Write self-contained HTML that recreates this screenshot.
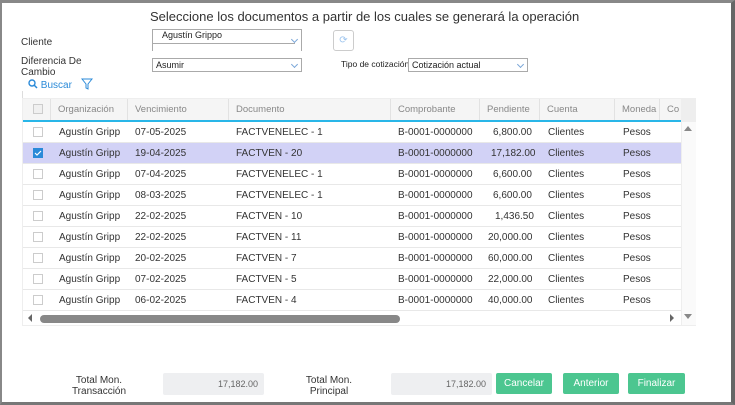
<!DOCTYPE html>
<html><head><meta charset="utf-8"><style>
*{box-sizing:border-box;margin:0;padding:0}
body{width:735px;height:405px;overflow:hidden;background:#fff;font-family:"Liberation Sans",sans-serif;position:relative}
.frame{position:absolute;left:0;top:0;width:735px;height:405px;border-top:3px solid #888;border-left:2px solid #888;border-right:4px solid #666;border-bottom:3px solid #777}
.a{position:absolute;white-space:nowrap}
.sel{position:absolute;border:1px solid #aaa;height:14px;font-size:9px;padding-left:3px;line-height:12px;color:#222}
.chev{position:absolute;right:4px;top:3px;width:5px;height:5px;border-right:1px solid #7aa6d8;border-bottom:1px solid #7aa6d8;transform:rotate(45deg)}
.tbl{position:absolute;left:22px;top:98px;width:674px;height:228px;border:1px solid #eee}
.hdr{position:absolute;left:0;top:0;height:23px;width:658px;background:#f5f5f5;border-bottom:2px solid #29b6e8;font-size:9.5px;color:#888}
.hc{position:absolute;top:0;height:21px;line-height:21px;padding-left:7px;border-right:1px solid #e2e2e2}
.row{position:absolute;left:0;width:658px;height:21px;border-bottom:1px solid #e8e8e8;font-size:10px;color:#333;line-height:22px}
.row span{position:absolute;top:0}
.cb{position:absolute;left:10px;top:5px;width:10px;height:10px;border:1px solid #ccc;background:#fff}
.btn{position:absolute;top:373px;height:21px;background:#4cc690;color:#fff;font-size:10px;line-height:21px;text-align:center;border-radius:2px}
.tot{position:absolute;top:373px;height:22px;background:#eeeff1;border-radius:2px;font-size:9px;color:#666;text-align:right;padding-right:6px;line-height:22px}
.lbl{position:absolute;font-size:10px;color:#333;text-align:center;line-height:11px}
</style></head><body>
<div class="frame"></div>
<div class="a" style="left:150px;top:9px;font-size:13px;color:#333">Seleccione los documentos a partir de los cuales se generará la operación</div>
<div class="a" style="left:21px;top:37px;font-size:10px;color:#333">Cliente</div>
<div class="a" style="left:21px;top:56px;font-size:10px;color:#333;line-height:11px">Diferencia De<br>Cambio</div>
<div class="sel" style="left:152px;top:29px;width:150px;height:22px;border-bottom:none;padding-left:9px;line-height:11px">Agustín Grippo<div class="chev" style="top:7px"></div></div>
<div class="a" style="left:152px;top:43px;width:143px;border-top:1px solid #aaa"></div>
<div class="sel" style="left:152px;top:58px;width:150px">Asumir<div class="chev"></div></div>
<div class="a" style="left:333px;top:30px;width:21px;height:21px;border:1px solid #ccc;border-radius:3px;color:#9cc4ee;font-size:10px;text-align:center;line-height:19px">⟳</div>
<div class="a" style="left:341px;top:59px;font-size:8.5px;color:#222">Tipo de cotización</div>
<div class="sel" style="left:408px;top:58px;width:120px">Cotización actual<div class="chev"></div></div>
<div class="a" style="left:28px;top:78px;font-size:10px;color:#2a8ad8">
<svg width="10" height="10" style="vertical-align:-1px"><circle cx="4" cy="4" r="3" fill="none" stroke="#2a8ad8" stroke-width="1.4"/><line x1="6" y1="6" x2="9" y2="9" stroke="#2a8ad8" stroke-width="1.5"/></svg> Buscar
<svg width="12" height="12" style="vertical-align:-2px;margin-left:6px"><path d="M1 1 H11 L7 6 V11 L5 10 V6 Z" fill="none" stroke="#2a8ad8"/></svg></div>
<div class="a" style="left:22px;top:91px;width:1px;height:7px;background:#ddd"></div>
<div class="tbl">
<div class="hdr">
<div class="hc" style="left:0;width:28px"><div class="cb" style="top:5px;background:#f0f0f0"></div></div>
<div class="hc" style="left:28px;width:77px">Organización</div>
<div class="hc" style="left:105px;width:101px">Vencimiento</div>
<div class="hc" style="left:206px;width:162px">Documento</div>
<div class="hc" style="left:368px;width:89px">Comprobante</div>
<div class="hc" style="left:457px;width:60px">Pendiente</div>
<div class="hc" style="left:517px;width:75px">Cuenta</div>
<div class="hc" style="left:592px;width:45px">Moneda</div>
<div class="hc" style="left:637px;width:21px;border:none;overflow:hidden">Co</div>
</div>
<div style="position:absolute;left:658px;top:0;width:15px;height:226px;background:#fafafa;border-left:1px solid #eee"></div>
<div style="position:absolute;left:658px;top:0;width:15px;height:23px;background:#eee"></div>
<div style="position:absolute;left:661px;top:27px;border:4px solid transparent;border-bottom:5px solid #888;border-top:none"></div>
<div style="position:absolute;left:661px;top:215px;border:4px solid transparent;border-top:5px solid #888;border-bottom:none"></div>
<div class="row" style="top:23px"><div class="cb"></div><span style="left:36px">Agustín Gripp</span><span style="left:112px">07-05-2025</span><span style="left:213px">FACTVENELEC - 1</span><span style="left:375px">B-0001-0000000</span><span style="left:470px">6,800.00</span><span style="left:525px">Clientes</span><span style="left:600px">Pesos</span></div>
<div class="row" style="top:44px;background:#d2d2f6"><div class="cb" style="background:#2a8ad8;border-color:#2a8ad8"><svg width="8" height="8" style="position:absolute;left:0;top:0"><path d="M1 4 L3 6 L7 2" fill="none" stroke="#fff" stroke-width="1.2"/></svg></div><span style="left:36px">Agustín Gripp</span><span style="left:112px">19-04-2025</span><span style="left:213px">FACTVEN - 20</span><span style="left:375px">B-0001-0000000</span><span style="left:468px">17,182.00</span><span style="left:525px">Clientes</span><span style="left:600px">Pesos</span></div>
<div class="row" style="top:65px"><div class="cb"></div><span style="left:36px">Agustín Gripp</span><span style="left:112px">07-04-2025</span><span style="left:213px">FACTVENELEC - 1</span><span style="left:375px">B-0001-0000000</span><span style="left:470px">6,600.00</span><span style="left:525px">Clientes</span><span style="left:600px">Pesos</span></div>
<div class="row" style="top:86px"><div class="cb"></div><span style="left:36px">Agustín Gripp</span><span style="left:112px">08-03-2025</span><span style="left:213px">FACTVENELEC - 1</span><span style="left:375px">B-0001-0000000</span><span style="left:470px">6,600.00</span><span style="left:525px">Clientes</span><span style="left:600px">Pesos</span></div>
<div class="row" style="top:107px"><div class="cb"></div><span style="left:36px">Agustín Gripp</span><span style="left:112px">22-02-2025</span><span style="left:213px">FACTVEN - 10</span><span style="left:375px">B-0001-0000000</span><span style="left:472px">1,436.50</span><span style="left:525px">Clientes</span><span style="left:600px">Pesos</span></div>
<div class="row" style="top:128px"><div class="cb"></div><span style="left:36px">Agustín Gripp</span><span style="left:112px">22-02-2025</span><span style="left:213px">FACTVEN - 11</span><span style="left:375px">B-0001-0000000</span><span style="left:465px">20,000.00</span><span style="left:525px">Clientes</span><span style="left:600px">Pesos</span></div>
<div class="row" style="top:149px"><div class="cb"></div><span style="left:36px">Agustín Gripp</span><span style="left:112px">20-02-2025</span><span style="left:213px">FACTVEN - 7</span><span style="left:375px">B-0001-0000000</span><span style="left:465px">60,000.00</span><span style="left:525px">Clientes</span><span style="left:600px">Pesos</span></div>
<div class="row" style="top:170px"><div class="cb"></div><span style="left:36px">Agustín Gripp</span><span style="left:112px">07-02-2025</span><span style="left:213px">FACTVEN - 5</span><span style="left:375px">B-0001-0000000</span><span style="left:465px">22,000.00</span><span style="left:525px">Clientes</span><span style="left:600px">Pesos</span></div>
<div class="row" style="top:191px"><div class="cb"></div><span style="left:36px">Agustín Gripp</span><span style="left:112px">06-02-2025</span><span style="left:213px">FACTVEN - 4</span><span style="left:375px">B-0001-0000000</span><span style="left:465px">40,000.00</span><span style="left:525px">Clientes</span><span style="left:600px">Pesos</span></div>
<div style="position:absolute;left:5px;top:215px;border:4px solid transparent;border-right:4px solid #666;border-left:none"></div>
<div style="position:absolute;left:17px;top:216px;width:360px;height:8px;background:#888;border-radius:4px"></div>
<div style="position:absolute;left:647px;top:215px;border:4px solid transparent;border-left:4px solid #666;border-right:none"></div>
</div>
<div class="lbl" style="left:60px;top:375px;width:78px">Total Mon.<br>Transacción</div>
<div class="tot" style="left:163px;width:101px">17,182.00</div>
<div class="lbl" style="left:290px;top:375px;width:78px">Total Mon.<br>Principal</div>
<div class="tot" style="left:391px;width:101px">17,182.00</div>
<div class="btn" style="left:496px;width:56px">Cancelar</div>
<div class="btn" style="left:563px;width:56px">Anterior</div>
<div class="btn" style="left:628px;width:57px">Finalizar</div>
</body></html>
